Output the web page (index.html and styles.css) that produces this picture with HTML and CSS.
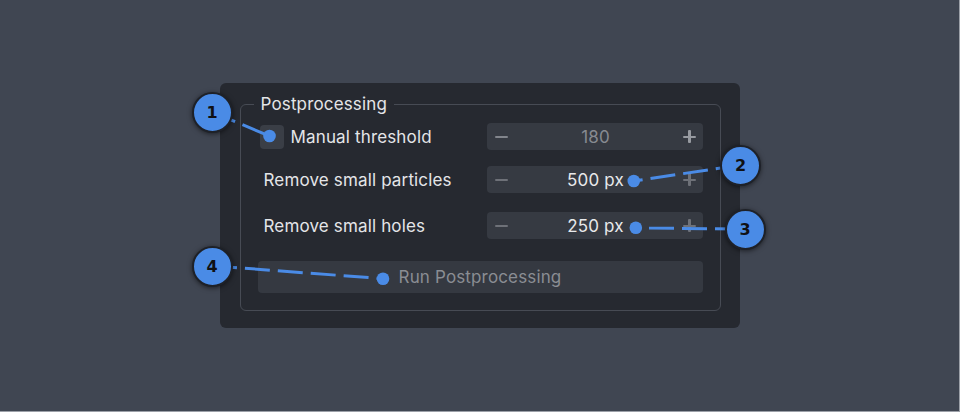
FILE: index.html
```html
<!DOCTYPE html>
<html lang="en">
<head>
<meta charset="utf-8">
<title>Postprocessing</title>
<link rel="stylesheet" href="styles.css">
</head>
<body>
<div class="screen">
  <div class="panel">
    <fieldset class="group">
      <legend class="group-title">Postprocessing</legend>
      <div class="row row-first">
        <label class="check">
          <span class="check-box"></span>
          <span class="check-label">Manual threshold</span>
        </label>
        <div class="spin spin-disabled">
          <span class="spin-btn minus"></span>
          <span class="spin-value">180</span>
          <span class="spin-btn plus"></span>
        </div>
      </div>
      <div class="row row-second">
        <span class="row-label">Remove small particles</span>
        <div class="spin">
          <span class="spin-btn minus"></span>
          <span class="spin-value">500 px</span>
          <span class="spin-btn plus"></span>
        </div>
      </div>
      <div class="row row-third">
        <span class="row-label">Remove small holes</span>
        <div class="spin">
          <span class="spin-btn minus"></span>
          <span class="spin-value">250 px</span>
          <span class="spin-btn plus"></span>
        </div>
      </div>
      <button class="run-btn" type="button">Run Postprocessing</button>
    </fieldset>
  </div>

  <svg class="callout-lines" width="960" height="412" viewBox="0 0 960 412">
    <g class="dash">
      <line x1="212" y1="112" x2="269.5" y2="136" />
      <line x1="740.5" y1="165" x2="634" y2="181" />
      <line x1="740" y1="229" x2="636" y2="228" />
      <line x1="212" y1="265.8" x2="383" y2="278.7" />
    </g>
    <g class="dots">
      <circle cx="269.5" cy="136" r="6.3" />
      <circle cx="633.8" cy="181" r="6.3" />
      <circle cx="635.8" cy="227.8" r="6.3" />
      <circle cx="383" cy="278.7" r="6.3" />
    </g>
  </svg>
  <span class="badge badge-1">1</span>
  <span class="badge badge-2">2</span>
  <span class="badge badge-3">3</span>
  <span class="badge badge-4">4</span>
</div>
</body>
</html>
```

FILE: styles.css
```css
* { box-sizing: border-box; }

html, body {
  margin: 0;
  padding: 0;
  background: #404652;
}

.screen {
  position: relative;
  width: 960px;
  height: 412px;
  background: #404652;
  border-right: 1px solid #9ca0a8;
  border-bottom: 1px solid #9ca0a8;
  display: flex;
  align-items: center;
  justify-content: center;
  font-family: Inter, "Noto Sans", sans-serif;
  font-size: 17px;
  letter-spacing: 0.15px;
  color: #e4e5e8;
}

.panel {
  width: 520px;
  background: #262930;
  border-radius: 6px;
  padding: 11px 19px 17px 20px;
}

.group {
  margin: 0;
  border: 1px solid #474b54;
  border-radius: 6px;
  padding: 9px 17px 17px 17px;
  min-width: 0;
}

.group-title {
  margin-left: -4px;
  padding: 0 7px;
  line-height: 20px;
  color: #e4e5e8;
}

.row {
  display: flex;
  align-items: center;
  justify-content: space-between;
  height: 27px;
}

.row-second { margin-top: 16px; }
.row-third { margin-top: 19px; }

.check {
  display: flex;
  align-items: center;
  gap: 7px;
  margin-left: 2px;
}

.check-box {
  width: 24px;
  height: 24px;
  border-radius: 4px;
  background: #3a3e46;
}

.row-label {
  padding-left: 6px;
}

.spin {
  width: 216px;
  height: 27px;
  border-radius: 4px;
  background: #363a42;
  display: flex;
  align-items: center;
  padding: 0 6px 0 8px;
}

.spin-value {
  flex: 1;
  text-align: center;
  color: #e8e9eb;
  padding-left: 0;
}

.spin-disabled .spin-value { color: #878a91; }

.spin-btn {
  position: relative;
  width: 14px;
  height: 14px;
}

.spin-btn::before,
.plus::after {
  content: "";
  position: absolute;
  background: #6e7178;
  border-radius: 1px;
}

.spin-btn::before {
  left: 0;
  right: 1px;
  top: 6px;
  height: 2.4px;
}

.plus::after {
  top: 0;
  bottom: 1px;
  left: 5.8px;
  width: 2.4px;
}

.spin-disabled .minus::before { background: #82858c; }
.spin-disabled .plus::before,
.spin-disabled .plus::after { background: #979aa0; }

.run-btn {
  display: block;
  width: 445px;
  height: 32px;
  margin: 22px 0 0 0;
  border: 0;
  border-radius: 4px;
  background: #353941;
  color: #8a8d93;
  font: inherit;
  letter-spacing: inherit;
  padding: 0;
}

.callout-lines {
  position: absolute;
  left: 0;
  top: 0;
  pointer-events: none;
}

.dash line {
  stroke: #4a8be6;
  stroke-width: 3;
  stroke-dasharray: 25 8;
}

.dots circle {
  fill: #4a8be6;
}

.badge {
  position: absolute;
  width: 41px;
  height: 41px;
  border-radius: 50%;
  background: #4a8be6;
  border: 2px solid #1e2128;
  box-shadow: 0 1px 5px rgba(0, 0, 0, 0.55);
  display: flex;
  align-items: center;
  justify-content: center;
  font-family: "DejaVu Sans", sans-serif;
  font-weight: bold;
  font-size: 16px;
  letter-spacing: 0;
  color: #101114;
}

.badge-1 { left: 191.5px; top: 91.5px; }
.badge-2 { left: 720px; top: 144.5px; }
.badge-3 { left: 724.5px; top: 208.5px; }
.badge-4 { left: 191.5px; top: 245.5px; }
```
